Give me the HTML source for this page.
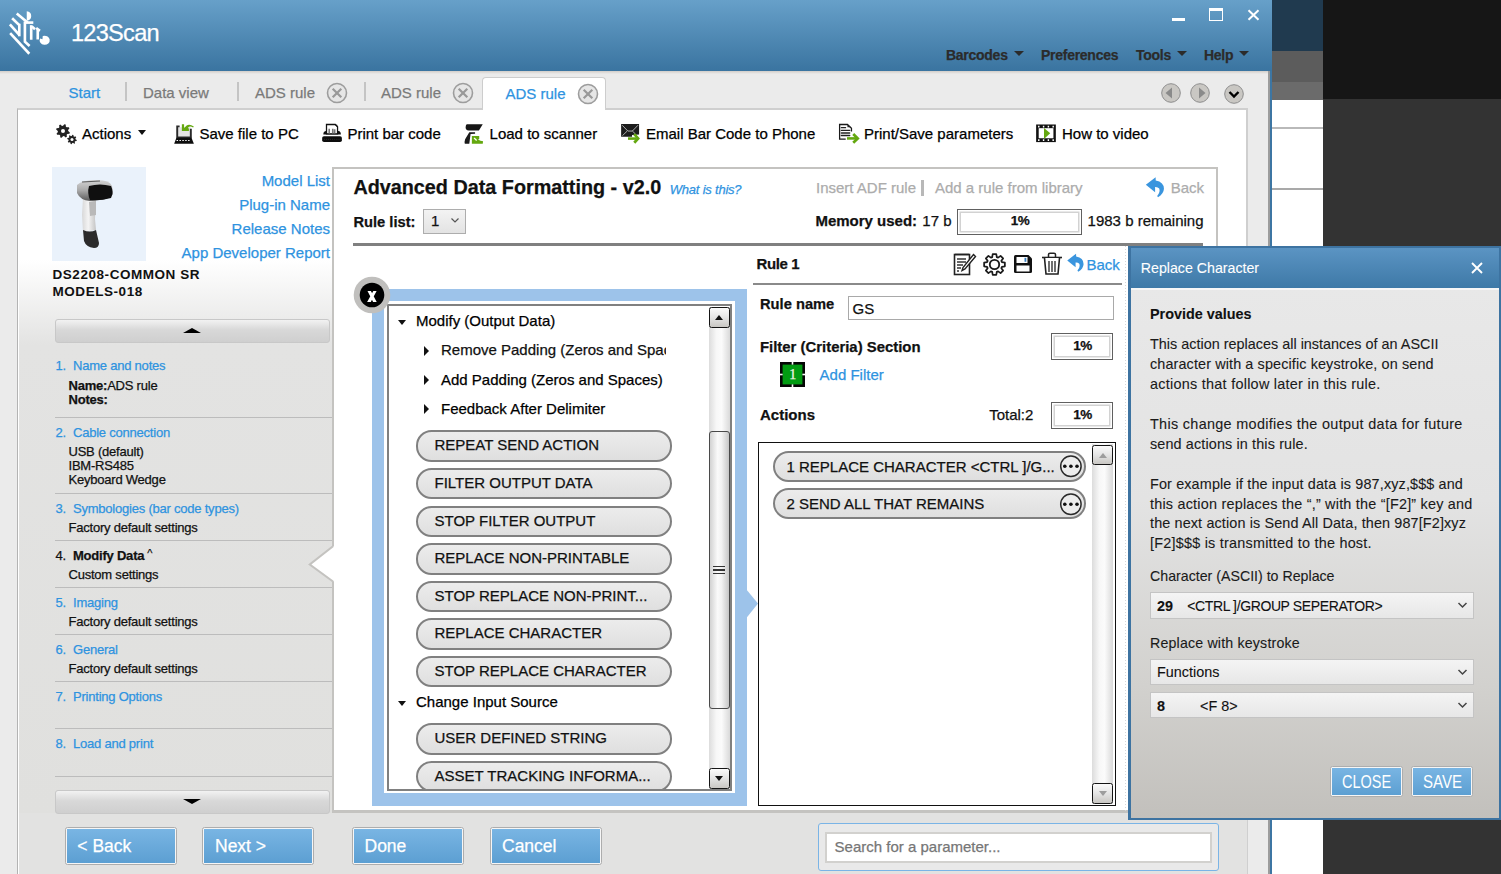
<!DOCTYPE html><html><head><meta charset="utf-8"><style>
html,body{margin:0;padding:0;width:1501px;height:874px;overflow:hidden;background:#ebebeb;font-family:"Liberation Sans",sans-serif}
div{-webkit-text-stroke:0.25px currentColor}
</style></head><body>
<div style="position:absolute;left:1272.00px;top:0.00px;width:51px;height:874px;background:#fff"></div>
<div style="position:absolute;left:1272.00px;top:0.00px;width:51px;height:51px;background:#203a4f"></div>
<div style="position:absolute;left:1272.00px;top:51.00px;width:51px;height:31px;background:#5c5c5c"></div>
<div style="position:absolute;left:1272.00px;top:82.00px;width:51px;height:17.5px;background:#6b6b6b"></div>
<div style="position:absolute;left:1272.00px;top:127.00px;width:51px;height:2px;background:#b9b9b9"></div>
<div style="position:absolute;left:1272.00px;top:188.00px;width:51px;height:2px;background:#a9a9a9"></div>
<div style="position:absolute;left:1323.00px;top:0.00px;width:178px;height:99px;background:#161616"></div>
<div style="position:absolute;left:1323.00px;top:99.00px;width:178px;height:775px;background:#333333"></div>
<div style="position:absolute;left:1269.50px;top:71.00px;width:2.5px;height:803px;background:#3d76a3"></div>
<div style="position:absolute;left:0.00px;top:71.00px;width:1270px;height:803px;background:#ebebeb"></div>
<div style="position:absolute;left:1268.00px;top:71.00px;width:1.8px;height:803px;background:#9c9c9c"></div>
<div style="position:absolute;left:0.00px;top:0.00px;width:1272px;height:71px;background:linear-gradient(#67a0c9,#3a74a0)"></div>
<div style="position:absolute;left:0.00px;top:71.00px;width:1268px;height:3px;background:linear-gradient(#d2cdc8,#ebebeb)"></div>
<svg style="position:absolute;left:5px;top:8px" width="50" height="50" viewBox="0 0 874 874">
<g stroke="#fff" stroke-width="46" fill="none" stroke-linecap="butt">
<path d="M90 440L425 800"/>
<path d="M85 285L250 470"/>
<path d="M125 180L250 300"/>
<path d="M250 275V495"/>
<path d="M205 95L395 255"/>
<path d="M348 235V590L430 665"/>
<path d="M355 255H495"/>
<path d="M458 300V555"/>
<path d="M470 325L525 370"/>
<path d="M572 375V550"/>
<path d="M545 350L610 400"/>
</g>
<path d="M380 55A88 84 0 0 1 380 222Z" fill="#fff"/>
<path d="M612 535A88 80 0 1 0 660 490L655 545Z" fill="#fff"/>
</svg>
<div style="position:absolute;left:71px;top:21.82px;font-family:'Liberation Sans',sans-serif;font-size:23.6px;line-height:23.6px;font-weight:400;color:#fff;white-space:nowrap;letter-spacing:-0.75px;">123Scan</div>
<div style="position:absolute;left:1171.60px;top:17.70px;width:13.6px;height:3.5px;background:#fff"></div>
<div style="position:absolute;left:1209.00px;top:8.00px;width:13.7px;height:13px;border:1.6px solid #fff;border-top-width:3.2px;box-sizing:border-box"></div>
<svg style="position:absolute;left:1247px;top:9px" width="13" height="12" viewBox="0 0 13 12"><path d="M1.5 1.2L11.5 10.8M11.5 1.2L1.5 10.8" stroke="#fff" stroke-width="2"/></svg>
<div style="position:absolute;left:946px;top:48.35px;font-family:'Liberation Sans',sans-serif;font-size:14px;line-height:14px;font-weight:700;color:#2b2b2b;white-space:nowrap;letter-spacing:-0.27px;">Barcodes</div>
<div style="position:absolute;left:1014px;top:51px;width:0;height:0;border-left:5px solid transparent;border-right:5px solid transparent;border-top:5px solid #2b2b2b"></div>
<div style="position:absolute;left:1041px;top:48.35px;font-family:'Liberation Sans',sans-serif;font-size:14px;line-height:14px;font-weight:700;color:#2b2b2b;white-space:nowrap;letter-spacing:-0.27px;">Preferences</div>
<div style="position:absolute;left:1136px;top:48.35px;font-family:'Liberation Sans',sans-serif;font-size:14px;line-height:14px;font-weight:700;color:#2b2b2b;white-space:nowrap;letter-spacing:-0.27px;">Tools</div>
<div style="position:absolute;left:1177px;top:51px;width:0;height:0;border-left:5px solid transparent;border-right:5px solid transparent;border-top:5px solid #2b2b2b"></div>
<div style="position:absolute;left:1204px;top:48.35px;font-family:'Liberation Sans',sans-serif;font-size:14px;line-height:14px;font-weight:700;color:#2b2b2b;white-space:nowrap;letter-spacing:-0.27px;">Help</div>
<div style="position:absolute;left:1239px;top:51px;width:0;height:0;border-left:5px solid transparent;border-right:5px solid transparent;border-top:5px solid #2b2b2b"></div>
<div style="position:absolute;left:68.6px;top:85.10px;font-family:'Liberation Sans',sans-serif;font-size:15px;line-height:15px;font-weight:400;color:#2e93df;white-space:nowrap;">Start</div>
<div style="position:absolute;left:125.00px;top:82.00px;width:2px;height:19px;background:#c4c4c4"></div>
<div style="position:absolute;left:143px;top:85.10px;font-family:'Liberation Sans',sans-serif;font-size:15px;line-height:15px;font-weight:400;color:#7a7a7a;white-space:nowrap;">Data view</div>
<div style="position:absolute;left:237.00px;top:82.00px;width:2px;height:19px;background:#c4c4c4"></div>
<div style="position:absolute;left:255px;top:85.10px;font-family:'Liberation Sans',sans-serif;font-size:15px;line-height:15px;font-weight:400;color:#7a7a7a;white-space:nowrap;">ADS rule</div>
<svg style="position:absolute;left:326px;top:82px" width="22" height="22" viewBox="0 0 22 22"><circle cx="11" cy="11" r="9.5" fill="#e6e6e6" stroke="#9d9d9d" stroke-width="1.6"/><path d="M6.7 6.7L15.3 15.3M15.3 6.7L6.7 15.3" stroke="#999" stroke-width="2.2"/></svg>
<div style="position:absolute;left:364.00px;top:82.00px;width:2px;height:19px;background:#c4c4c4"></div>
<div style="position:absolute;left:381px;top:85.10px;font-family:'Liberation Sans',sans-serif;font-size:15px;line-height:15px;font-weight:400;color:#7a7a7a;white-space:nowrap;">ADS rule</div>
<svg style="position:absolute;left:452px;top:82px" width="22" height="22" viewBox="0 0 22 22"><circle cx="11" cy="11" r="9.5" fill="#e6e6e6" stroke="#9d9d9d" stroke-width="1.6"/><path d="M6.7 6.7L15.3 15.3M15.3 6.7L6.7 15.3" stroke="#999" stroke-width="2.2"/></svg>
<div style="position:absolute;left:482.00px;top:77.00px;width:124px;height:33px;background:#fff;border:1px solid #cdcdcd;border-bottom:none;border-radius:4px 4px 0 0;box-sizing:border-box"></div>
<div style="position:absolute;left:505.5px;top:86.10px;font-family:'Liberation Sans',sans-serif;font-size:15px;line-height:15px;font-weight:400;color:#2e93df;white-space:nowrap;">ADS rule</div>
<svg style="position:absolute;left:577px;top:83px" width="22" height="22" viewBox="0 0 22 22"><circle cx="11" cy="11" r="9.5" fill="#e6e6e6" stroke="#9d9d9d" stroke-width="1.6"/><path d="M6.7 6.7L15.3 15.3M15.3 6.7L6.7 15.3" stroke="#999" stroke-width="2.2"/></svg>
<svg style="position:absolute;left:1160px;top:82px" width="22" height="22" viewBox="0 0 22 22"><circle cx="11" cy="11" r="9.3" fill="#c9c7c3" stroke="#8e8e8e" stroke-width="1"/><path d="M5.5 11L12 5.5V16.5Z" fill="#8a8a8a"/></svg>
<svg style="position:absolute;left:1188.5px;top:82px" width="22" height="22" viewBox="0 0 22 22"><circle cx="11" cy="11" r="9.3" fill="#c9c7c3" stroke="#8e8e8e" stroke-width="1"/><path d="M16.5 11L10 5.5V16.5Z" fill="#8a8a8a"/></svg>
<svg style="position:absolute;left:1223px;top:83px" width="22" height="22" viewBox="0 0 22 22"><circle cx="11" cy="11" r="9.3" fill="#c9c7c3" stroke="#8e8e8e" stroke-width="1"/><path d="M6.5 9L11 13.5L15.5 9" stroke="#000" stroke-width="2.4" fill="none"/></svg>
<div style="position:absolute;left:17.00px;top:108.00px;width:1231px;height:780px;background:#fff;border:2px solid #cfcfcf;border-left:1.6px solid #b3b3b3;border-bottom:none;box-sizing:border-box"></div>
<div style="position:absolute;left:483.00px;top:106.00px;width:122px;height:4px;background:#fff"></div>
<svg style="position:absolute;left:56px;top:124px" width="22" height="21" viewBox="0 0 22 21">
<path d="M13.86,8.39L13.46,9.70L11.31,9.90L10.66,10.69L10.87,12.83L9.66,13.48L8.00,12.10L6.98,12.20L5.61,13.86L4.30,13.46L4.10,11.31L3.31,10.66L1.17,10.87L0.52,9.66L1.90,8.00L1.80,6.98L0.14,5.61L0.54,4.30L2.69,4.10L3.34,3.31L3.13,1.17L4.34,0.52L6.00,1.90L7.02,1.80L8.39,0.14L9.70,0.54L9.90,2.69L10.69,3.34L12.83,3.13L13.48,4.34L12.10,6.00L12.20,7.02Z" fill="#222"/><circle cx="7" cy="7" r="2" fill="#fff"/>
<path d="M20.78,15.98L20.59,16.90L19.08,17.16L18.70,17.73L19.04,19.22L18.25,19.74L17.01,18.85L16.34,18.98L15.52,20.28L14.60,20.09L14.34,18.58L13.77,18.20L12.28,18.54L11.76,17.75L12.65,16.51L12.52,15.84L11.22,15.02L11.41,14.10L12.92,13.84L13.30,13.27L12.96,11.78L13.75,11.26L14.99,12.15L15.66,12.02L16.48,10.72L17.40,10.91L17.66,12.42L18.23,12.80L19.72,12.46L20.24,13.25L19.35,14.49L19.48,15.16Z" fill="#222"/><circle cx="16" cy="15.5" r="1.5" fill="#fff"/></svg>
<div style="position:absolute;left:82px;top:126.10px;font-family:'Liberation Sans',sans-serif;font-size:15px;line-height:15px;font-weight:400;color:#000;white-space:nowrap;">Actions</div>
<div style="position:absolute;left:138px;top:130px;width:0;height:0;border-left:4.5px solid transparent;border-right:4.5px solid transparent;border-top:5px solid #111"></div>
<svg style="position:absolute;left:170px;top:120px" width="30" height="28" viewBox="0 0 936 874">
<rect x="240" y="225" width="400" height="320" fill="#e4e4e4"/>
<path d="M300 200H225V545H650V270" fill="none" stroke="#2a2a2a" stroke-width="60"/>
<path d="M200 555H670L745 745H130Z" fill="#0d0d0d"/>
<path d="M205 640H650" stroke="#fff" stroke-width="32" stroke-dasharray="45 45"/>
<path d="M370 130H440V250L520 175Q600 110 745 200L720 235Q620 175 560 240L590 270V340H370Z" fill="#64a80f"/>
</svg>
<div style="position:absolute;left:199.5px;top:126.10px;font-family:'Liberation Sans',sans-serif;font-size:15px;line-height:15px;font-weight:400;color:#000;white-space:nowrap;">Save file to PC</div>
<svg style="position:absolute;left:318px;top:120px" width="30" height="28" viewBox="0 0 936 874">
<path d="M165 450Q165 350 255 340H640Q710 350 715 450Z" fill="#111"/>
<path d="M265 140H540L610 210V430H265Z" fill="#fff" stroke="#111" stroke-width="40"/>
<path d="M520 150L600 150L600 220Z" fill="#111"/>
<path d="M350 270V420M460 270V420M520 290V420" stroke="#777" stroke-width="50"/>
<rect x="130" y="505" width="615" height="180" rx="55" fill="#0d0d0d"/>
<path d="M190 605H690" stroke="#555" stroke-width="20" stroke-dasharray="20 45"/>
</svg>
<div style="position:absolute;left:347.4px;top:126.10px;font-family:'Liberation Sans',sans-serif;font-size:15px;line-height:15px;font-weight:400;color:#000;white-space:nowrap;">Print bar code</div>
<svg style="position:absolute;left:460px;top:120px" width="30" height="28" viewBox="0 0 936 874">
<path d="M210 130H710L590 330H270Q170 320 175 230Q180 140 210 130Z" fill="#161616"/>
<path d="M290 380H470V430L330 440L290 740H150Q130 690 160 600Z" fill="#1a1a1a"/>
<path d="M370 500H600V590L560 610L640 650L720 660L710 740H370Z" fill="#64a80f"/>
<path d="M440 560L520 640" stroke="#fff" stroke-width="40"/>
</svg>
<div style="position:absolute;left:489.6px;top:126.10px;font-family:'Liberation Sans',sans-serif;font-size:15px;line-height:15px;font-weight:400;color:#000;white-space:nowrap;">Load to scanner</div>
<svg style="position:absolute;left:616px;top:120px" width="30" height="28" viewBox="0 0 936 874">
<path d="M160 125H720V450L500 470V520H160Z" fill="#1c1c1c"/>
<path d="M195 165L370 345H510L690 160M200 490L350 345M510 345L600 430" stroke="#e8e8e8" stroke-width="22" fill="none"/>
<path d="M375 580H640" stroke="#64a80f" stroke-width="80"/>
<path d="M570 440L690 575L570 710" stroke="#64a80f" stroke-width="85" fill="none"/>
</svg>
<div style="position:absolute;left:646px;top:126.10px;font-family:'Liberation Sans',sans-serif;font-size:15px;line-height:15px;font-weight:400;color:#000;white-space:nowrap;">Email Bar Code to Phone</div>
<svg style="position:absolute;left:834px;top:120px" width="30" height="28" viewBox="0 0 936 874">
<path d="M365 600H175V140H420L545 260V360" fill="none" stroke="#1a1a1a" stroke-width="40"/>
<path d="M420 150V230H530Z" fill="#222"/>
<path d="M230 240H360M230 325H490M230 405H490M230 485H490" stroke="#222" stroke-width="42" stroke-linecap="round"/>
<path d="M405 575H700" stroke="#64a80f" stroke-width="80"/>
<path d="M600 440L740 575L600 710" stroke="#64a80f" stroke-width="85" fill="none"/>
</svg>
<div style="position:absolute;left:864px;top:126.10px;font-family:'Liberation Sans',sans-serif;font-size:15px;line-height:15px;font-weight:400;color:#000;white-space:nowrap;">Print/Save parameters</div>
<svg style="position:absolute;left:1031px;top:120px" width="30" height="28" viewBox="0 0 936 874">
<rect x="160" y="140" width="615" height="550" fill="#111"/>
<rect x="240" y="255" width="460" height="315" fill="#fff"/>
<path d="M215 205H725M215 630H725" stroke="#fff" stroke-width="55" stroke-dasharray="45 105" stroke-dashoffset="-5"/>
<path d="M405 250L600 415L405 590Z" fill="#64a80f"/>
</svg>
<div style="position:absolute;left:1062px;top:126.10px;font-family:'Liberation Sans',sans-serif;font-size:15px;line-height:15px;font-weight:400;color:#000;white-space:nowrap;">How to video</div>
<div style="position:absolute;left:19.00px;top:160.00px;width:314px;height:653px;background:linear-gradient(#fff 0px,#fff 100px,#e3e3e2 185px,#e0e0de 100%)"></div>
<div style="position:absolute;left:19.00px;top:813.00px;width:1228px;height:61px;background:#e2e2e1"></div>
<div style="position:absolute;left:52.00px;top:167.00px;width:94px;height:94px;background:#eaf2fb"></div>
<svg style="position:absolute;left:52px;top:167px" width="94" height="94" viewBox="0 0 94 94">
<defs><linearGradient id="hn" x1="0" x2="1" y1="0" y2="0"><stop offset="0" stop-color="#d8d8d8"/><stop offset="0.45" stop-color="#f4f4f4"/><stop offset="1" stop-color="#c4c4c4"/></linearGradient>
<linearGradient id="hd" x1="0" x2="0" y1="0" y2="1"><stop offset="0" stop-color="#d4d4d4"/><stop offset="0.5" stop-color="#a8a8a8"/><stop offset="1" stop-color="#5a5a5a"/></linearGradient></defs>
<path d="M31 31L44 32L43 52L44 63L31 65L30 48Z" fill="url(#hn)"/>
<path d="M37 35L44 34L44 48L38 49Z" fill="#b9b9b9"/>
<path d="M31 63Q38 66 44 63L47 76Q47 81 42 81Q34 80 32 74Z" fill="#2b2b2b"/>
<path d="M25 18Q30 13 45 13Q58 13 60 19L61 27Q58 32 48 33L38 34Q28 33 25 26Z" fill="url(#hd)"/>
<path d="M37 19Q48 16 59 19Q62 25 59 31Q48 34 38 33Q35 26 37 19Z" fill="#0f0f0f"/>
<path d="M30 15L48 14" stroke="#5a5a5a" stroke-width="1.2"/>
</svg>
<div style="position:absolute;right:1171px;top:173.30px;font-family:'Liberation Sans',sans-serif;font-size:15px;line-height:15px;font-weight:400;color:#2e93df;white-space:nowrap;">Model List</div>
<div style="position:absolute;right:1171px;top:197.30px;font-family:'Liberation Sans',sans-serif;font-size:15px;line-height:15px;font-weight:400;color:#2e93df;white-space:nowrap;">Plug-in Name</div>
<div style="position:absolute;right:1171px;top:221.30px;font-family:'Liberation Sans',sans-serif;font-size:15px;line-height:15px;font-weight:400;color:#2e93df;white-space:nowrap;">Release Notes</div>
<div style="position:absolute;right:1171px;top:245.30px;font-family:'Liberation Sans',sans-serif;font-size:15px;line-height:15px;font-weight:400;color:#2e93df;white-space:nowrap;">App Developer Report</div>
<div style="position:absolute;left:52.5px;top:267.87px;font-family:'Liberation Sans',sans-serif;font-size:13.5px;line-height:13.5px;font-weight:700;color:#111;white-space:nowrap;letter-spacing:0.55px;-webkit-text-stroke:0;">DS2208-COMMON SR</div>
<div style="position:absolute;left:52.5px;top:284.87px;font-family:'Liberation Sans',sans-serif;font-size:13.5px;line-height:13.5px;font-weight:700;color:#111;white-space:nowrap;letter-spacing:0.55px;-webkit-text-stroke:0;">MODELS-018</div>
<div style="position:absolute;left:55.00px;top:318.50px;width:275px;height:24px;background:linear-gradient(#f2f2f2,#d8d8d8 45%,#cfcfcf);border:1px solid #c8c8c8;border-radius:3px;box-sizing:border-box"></div>
<div style="position:absolute;left:183px;top:327.5px;width:0;height:0;border-left:9px solid transparent;border-right:9px solid transparent;border-bottom:5px solid #000"></div>
<div style="position:absolute;left:55.00px;top:789.50px;width:275px;height:24px;background:linear-gradient(#f2f2f2,#d8d8d8 45%,#cfcfcf);border:1px solid #c8c8c8;border-radius:3px;box-sizing:border-box"></div>
<div style="position:absolute;left:183px;top:798.5px;width:0;height:0;border-left:9px solid transparent;border-right:9px solid transparent;border-top:5px solid #000"></div>
<div style="position:absolute;left:55.5px;top:359.00px;font-family:'Liberation Sans',sans-serif;font-size:13px;line-height:13px;font-weight:400;color:#2e93df;white-space:nowrap;letter-spacing:-0.22px;">1.</div>
<div style="position:absolute;left:73px;top:359.00px;font-family:'Liberation Sans',sans-serif;font-size:13px;line-height:13px;font-weight:400;color:#2e93df;white-space:nowrap;letter-spacing:-0.22px;">Name and notes</div>
<div style="position:absolute;left:68.5px;top:378.80px;font-family:'Liberation Sans',sans-serif;font-size:13px;line-height:13px;font-weight:400;color:#111;white-space:nowrap;letter-spacing:-0.22px;"><b>Name:</b>ADS rule</div>
<div style="position:absolute;left:68.5px;top:392.80px;font-family:'Liberation Sans',sans-serif;font-size:13px;line-height:13px;font-weight:400;color:#111;white-space:nowrap;letter-spacing:-0.22px;"><b>Notes:</b></div>
<div style="position:absolute;left:55.00px;top:417.00px;width:278px;height:1px;background:#bcbcbc"></div>
<div style="position:absolute;left:55.5px;top:426.20px;font-family:'Liberation Sans',sans-serif;font-size:13px;line-height:13px;font-weight:400;color:#2e93df;white-space:nowrap;letter-spacing:-0.22px;">2.</div>
<div style="position:absolute;left:73px;top:426.20px;font-family:'Liberation Sans',sans-serif;font-size:13px;line-height:13px;font-weight:400;color:#2e93df;white-space:nowrap;letter-spacing:-0.22px;">Cable connection</div>
<div style="position:absolute;left:68.5px;top:445.40px;font-family:'Liberation Sans',sans-serif;font-size:13px;line-height:13px;font-weight:400;color:#111;white-space:nowrap;letter-spacing:-0.22px;">USB (default)</div>
<div style="position:absolute;left:68.5px;top:459.30px;font-family:'Liberation Sans',sans-serif;font-size:13px;line-height:13px;font-weight:400;color:#111;white-space:nowrap;letter-spacing:-0.22px;">IBM-RS485</div>
<div style="position:absolute;left:68.5px;top:473.40px;font-family:'Liberation Sans',sans-serif;font-size:13px;line-height:13px;font-weight:400;color:#111;white-space:nowrap;letter-spacing:-0.22px;">Keyboard Wedge</div>
<div style="position:absolute;left:55.00px;top:493.00px;width:278px;height:1px;background:#bcbcbc"></div>
<div style="position:absolute;left:55.5px;top:501.50px;font-family:'Liberation Sans',sans-serif;font-size:13px;line-height:13px;font-weight:400;color:#2e93df;white-space:nowrap;letter-spacing:-0.22px;">3.</div>
<div style="position:absolute;left:73px;top:501.50px;font-family:'Liberation Sans',sans-serif;font-size:13px;line-height:13px;font-weight:400;color:#2e93df;white-space:nowrap;letter-spacing:-0.22px;">Symbologies (bar code types)</div>
<div style="position:absolute;left:68.5px;top:520.50px;font-family:'Liberation Sans',sans-serif;font-size:13px;line-height:13px;font-weight:400;color:#111;white-space:nowrap;letter-spacing:-0.22px;">Factory default settings</div>
<div style="position:absolute;left:55.00px;top:540.00px;width:278px;height:1px;background:#bcbcbc"></div>
<div style="position:absolute;left:55.5px;top:548.50px;font-family:'Liberation Sans',sans-serif;font-size:13px;line-height:13px;font-weight:400;color:#111;white-space:nowrap;letter-spacing:-0.22px;">4.</div>
<div style="position:absolute;left:73px;top:548.50px;font-family:'Liberation Sans',sans-serif;font-size:13px;line-height:13px;font-weight:700;color:#111;white-space:nowrap;letter-spacing:-0.22px;">Modify Data<span style="font-weight:400;font-size:11px;position:relative;top:-3px;margin-left:3px">^</span></div>
<div style="position:absolute;left:68.5px;top:567.50px;font-family:'Liberation Sans',sans-serif;font-size:13px;line-height:13px;font-weight:400;color:#111;white-space:nowrap;letter-spacing:-0.22px;">Custom settings</div>
<div style="position:absolute;left:55.00px;top:587.00px;width:278px;height:1px;background:#bcbcbc"></div>
<div style="position:absolute;left:55.5px;top:595.50px;font-family:'Liberation Sans',sans-serif;font-size:13px;line-height:13px;font-weight:400;color:#2e93df;white-space:nowrap;letter-spacing:-0.22px;">5.</div>
<div style="position:absolute;left:73px;top:595.50px;font-family:'Liberation Sans',sans-serif;font-size:13px;line-height:13px;font-weight:400;color:#2e93df;white-space:nowrap;letter-spacing:-0.22px;">Imaging</div>
<div style="position:absolute;left:68.5px;top:614.50px;font-family:'Liberation Sans',sans-serif;font-size:13px;line-height:13px;font-weight:400;color:#111;white-space:nowrap;letter-spacing:-0.22px;">Factory default settings</div>
<div style="position:absolute;left:55.00px;top:634.00px;width:278px;height:1px;background:#bcbcbc"></div>
<div style="position:absolute;left:55.5px;top:642.50px;font-family:'Liberation Sans',sans-serif;font-size:13px;line-height:13px;font-weight:400;color:#2e93df;white-space:nowrap;letter-spacing:-0.22px;">6.</div>
<div style="position:absolute;left:73px;top:642.50px;font-family:'Liberation Sans',sans-serif;font-size:13px;line-height:13px;font-weight:400;color:#2e93df;white-space:nowrap;letter-spacing:-0.22px;">General</div>
<div style="position:absolute;left:68.5px;top:661.50px;font-family:'Liberation Sans',sans-serif;font-size:13px;line-height:13px;font-weight:400;color:#111;white-space:nowrap;letter-spacing:-0.22px;">Factory default settings</div>
<div style="position:absolute;left:55.00px;top:681.00px;width:278px;height:1px;background:#bcbcbc"></div>
<div style="position:absolute;left:55.5px;top:689.50px;font-family:'Liberation Sans',sans-serif;font-size:13px;line-height:13px;font-weight:400;color:#2e93df;white-space:nowrap;letter-spacing:-0.22px;">7.</div>
<div style="position:absolute;left:73px;top:689.50px;font-family:'Liberation Sans',sans-serif;font-size:13px;line-height:13px;font-weight:400;color:#2e93df;white-space:nowrap;letter-spacing:-0.22px;">Printing Options</div>
<div style="position:absolute;left:55.00px;top:728.00px;width:278px;height:1px;background:#bcbcbc"></div>
<div style="position:absolute;left:55.5px;top:736.50px;font-family:'Liberation Sans',sans-serif;font-size:13px;line-height:13px;font-weight:400;color:#2e93df;white-space:nowrap;letter-spacing:-0.22px;">8.</div>
<div style="position:absolute;left:73px;top:736.50px;font-family:'Liberation Sans',sans-serif;font-size:13px;line-height:13px;font-weight:400;color:#2e93df;white-space:nowrap;letter-spacing:-0.22px;">Load and print</div>
<div style="position:absolute;left:55.00px;top:776.00px;width:278px;height:1px;background:#bcbcbc"></div>
<div style="position:absolute;left:332.00px;top:167.00px;width:886px;height:646px;background:#fff;border:2px solid #c4c3c0;border-bottom-width:3px;box-sizing:border-box"></div>
<svg style="position:absolute;left:300px;top:540px" width="40" height="50" viewBox="0 0 40 50"><path d="M33 6.5L9.8 24.5L33 41.2Z" fill="#fff"/><rect x="32" y="6.5" width="4" height="34.7" fill="#fff"/><path d="M33 6.2L9.8 24.5L33 41.5" fill="none" stroke="#c4c3c0" stroke-width="2.1" stroke-linejoin="miter"/></svg>
<div style="position:absolute;left:353.4px;top:177.84px;font-family:'Liberation Sans',sans-serif;font-size:19.8px;line-height:19.8px;font-weight:700;color:#111;white-space:nowrap;">Advanced Data Formatting - v2.0</div>
<div style="position:absolute;left:669.8px;top:183.30px;font-family:'Liberation Sans',sans-serif;font-size:13px;line-height:13px;font-weight:400;color:#2e93df;white-space:nowrap;letter-spacing:-0.22px;font-style:italic;">What is this?</div>
<div style="position:absolute;left:816px;top:179.70px;font-family:'Liberation Sans',sans-serif;font-size:15px;line-height:15px;font-weight:400;color:#acacac;white-space:nowrap;">Insert ADF rule</div>
<div style="position:absolute;left:921.00px;top:180.00px;width:3px;height:16px;background:#b8b8b8"></div>
<div style="position:absolute;left:935px;top:179.70px;font-family:'Liberation Sans',sans-serif;font-size:15px;line-height:15px;font-weight:400;color:#acacac;white-space:nowrap;">Add a rule from library</div>
<svg style="position:absolute;left:1140px;top:172px" width="30" height="30" viewBox="0 0 874 874">
<path d="M170 370L455 150L458 245Q700 290 698 490Q690 640 525 735L500 700Q600 580 560 480Q520 430 440 435L440 590Z" fill="#3a95de"/></svg>
<div style="position:absolute;left:1170.7px;top:179.70px;font-family:'Liberation Sans',sans-serif;font-size:15px;line-height:15px;font-weight:400;color:#acacac;white-space:nowrap;">Back</div>
<div style="position:absolute;left:353.4px;top:214.96px;font-family:'Liberation Sans',sans-serif;font-size:14.7px;line-height:14.7px;font-weight:700;color:#111;white-space:nowrap;">Rule list:</div>
<div style="position:absolute;left:423.00px;top:209.00px;width:43px;height:25px;background:linear-gradient(#f3f3f3,#e3e3e3);border:1px solid #adadad;box-sizing:border-box"></div>
<div style="position:absolute;left:431px;top:213.40px;font-family:'Liberation Sans',sans-serif;font-size:15px;line-height:15px;font-weight:400;color:#111;white-space:nowrap;">1</div>
<svg style="position:absolute;left:450px;top:216px" width="10" height="8" viewBox="0 0 10 8"><path d="M1.5 2.5L5 6L8.5 2.5" stroke="#555" stroke-width="1.2" fill="none"/></svg>
<div style="position:absolute;left:815.4px;top:213.30px;font-family:'Liberation Sans',sans-serif;font-size:15px;line-height:15px;font-weight:700;color:#111;white-space:nowrap;">Memory used:</div>
<div style="position:absolute;left:922.3px;top:213.30px;font-family:'Liberation Sans',sans-serif;font-size:15px;line-height:15px;font-weight:400;color:#111;white-space:nowrap;">17 b</div>
<div style="position:absolute;left:957.00px;top:208.50px;width:125px;height:26px;background:#fff;border:1px solid #606060;box-shadow:inset 0 0 0 1.5px #fff,inset 0 0 0 3px #d2d2d2;box-sizing:border-box"></div>
<div style="position:absolute;left:1020.0px;transform:translateX(-50%);top:214.27px;font-family:'Liberation Sans',sans-serif;font-size:13.5px;line-height:13.5px;font-weight:700;color:#111;white-space:nowrap;letter-spacing:-0.6px;">1%</div>
<div style="position:absolute;left:1087.6px;top:213.30px;font-family:'Liberation Sans',sans-serif;font-size:15px;line-height:15px;font-weight:400;color:#111;white-space:nowrap;">1983 b remaining</div>
<div style="position:absolute;left:353.00px;top:243.00px;width:850px;height:3px;background:#808080"></div>
<div style="position:absolute;left:372.00px;top:289.00px;width:375px;height:517px;background:#9dc3ea"></div>
<svg style="position:absolute;left:746px;top:589px" width="13" height="30" viewBox="0 0 13 30"><path d="M0 0L12 14.5L0 29.5Z" fill="#9dc3ea"/></svg>
<div style="position:absolute;left:384.00px;top:301.00px;width:351px;height:492px;background:#fff"></div>
<div style="position:absolute;left:387.00px;top:304.00px;width:345px;height:487px;background:#fff;border:2px solid #808080;box-sizing:border-box;overflow:hidden"></div>
<div style="position:absolute;left:389px;top:306px;width:342px;height:483px;overflow:hidden">
<div style="position:absolute;left:9.00px;top:14.00px;width:0px;height:0px;border-left:4.8px solid transparent;border-right:4.8px solid transparent;border-top:5.3px solid #111"></div>
<div style="position:absolute;left:27px;top:6.70px;font-family:'Liberation Sans',sans-serif;font-size:15px;line-height:15px;font-weight:400;color:#000;white-space:nowrap;">Modify (Output Data)</div>
<div style="position:absolute;left:34.50px;top:39.50px;width:0px;height:0px;border-top:5px solid transparent;border-bottom:5px solid transparent;border-left:5px solid #111"></div>
<div style="position:absolute;left:52px;top:35px;width:225px;height:24px;overflow:hidden">
<div style="position:absolute;left:0;top:0.6px;font-family:'Liberation Sans',sans-serif;font-size:15px;line-height:15px;white-space:nowrap;color:#111">Remove Padding (Zeros and Spaces)</div></div>
<div style="position:absolute;left:34.50px;top:69.00px;width:0px;height:0px;border-top:5px solid transparent;border-bottom:5px solid transparent;border-left:5px solid #111"></div>
<div style="position:absolute;left:52px;top:65.80px;font-family:'Liberation Sans',sans-serif;font-size:15px;line-height:15px;font-weight:400;color:#000;white-space:nowrap;">Add Padding (Zeros and Spaces)</div>
<div style="position:absolute;left:34.50px;top:98.00px;width:0px;height:0px;border-top:5px solid transparent;border-bottom:5px solid transparent;border-left:5px solid #111"></div>
<div style="position:absolute;left:52px;top:94.90px;font-family:'Liberation Sans',sans-serif;font-size:15px;line-height:15px;font-weight:400;color:#000;white-space:nowrap;">Feedback After Delimiter</div>
<div style="position:absolute;left:27.00px;top:124.30px;width:256px;height:31.5px;background:linear-gradient(#ececec,#dfdfdf);border:2px solid #808080;border-radius:15.5px;box-sizing:border-box"></div>
<div style="position:absolute;left:45.5px;top:131.40px;font-family:'Liberation Sans',sans-serif;font-size:15px;line-height:15px;font-weight:400;color:#111;white-space:nowrap;">REPEAT SEND ACTION</div>
<div style="position:absolute;left:27.00px;top:161.90px;width:256px;height:31.5px;background:linear-gradient(#ececec,#dfdfdf);border:2px solid #808080;border-radius:15.5px;box-sizing:border-box"></div>
<div style="position:absolute;left:45.5px;top:169.00px;font-family:'Liberation Sans',sans-serif;font-size:15px;line-height:15px;font-weight:400;color:#111;white-space:nowrap;">FILTER OUTPUT DATA</div>
<div style="position:absolute;left:27.00px;top:199.50px;width:256px;height:31.5px;background:linear-gradient(#ececec,#dfdfdf);border:2px solid #808080;border-radius:15.5px;box-sizing:border-box"></div>
<div style="position:absolute;left:45.5px;top:206.60px;font-family:'Liberation Sans',sans-serif;font-size:15px;line-height:15px;font-weight:400;color:#111;white-space:nowrap;">STOP FILTER OUTPUT</div>
<div style="position:absolute;left:27.00px;top:237.10px;width:256px;height:31.5px;background:linear-gradient(#ececec,#dfdfdf);border:2px solid #808080;border-radius:15.5px;box-sizing:border-box"></div>
<div style="position:absolute;left:45.5px;top:244.20px;font-family:'Liberation Sans',sans-serif;font-size:15px;line-height:15px;font-weight:400;color:#111;white-space:nowrap;">REPLACE NON-PRINTABLE</div>
<div style="position:absolute;left:27.00px;top:274.70px;width:256px;height:31.5px;background:linear-gradient(#ececec,#dfdfdf);border:2px solid #808080;border-radius:15.5px;box-sizing:border-box"></div>
<div style="position:absolute;left:45.5px;top:281.80px;font-family:'Liberation Sans',sans-serif;font-size:15px;line-height:15px;font-weight:400;color:#111;white-space:nowrap;">STOP REPLACE NON-PRINT...</div>
<div style="position:absolute;left:27.00px;top:312.30px;width:256px;height:31.5px;background:linear-gradient(#ececec,#dfdfdf);border:2px solid #808080;border-radius:15.5px;box-sizing:border-box"></div>
<div style="position:absolute;left:45.5px;top:319.40px;font-family:'Liberation Sans',sans-serif;font-size:15px;line-height:15px;font-weight:400;color:#111;white-space:nowrap;">REPLACE CHARACTER</div>
<div style="position:absolute;left:27.00px;top:349.90px;width:256px;height:31.5px;background:linear-gradient(#ececec,#dfdfdf);border:2px solid #808080;border-radius:15.5px;box-sizing:border-box"></div>
<div style="position:absolute;left:45.5px;top:357.00px;font-family:'Liberation Sans',sans-serif;font-size:15px;line-height:15px;font-weight:400;color:#111;white-space:nowrap;">STOP REPLACE CHARACTER</div>
<div style="position:absolute;left:9.00px;top:395.00px;width:0px;height:0px;border-left:4.8px solid transparent;border-right:4.8px solid transparent;border-top:5.3px solid #111"></div>
<div style="position:absolute;left:27px;top:388.30px;font-family:'Liberation Sans',sans-serif;font-size:15px;line-height:15px;font-weight:400;color:#000;white-space:nowrap;">Change Input Source</div>
<div style="position:absolute;left:27.00px;top:417.00px;width:256px;height:31.5px;background:linear-gradient(#ececec,#dfdfdf);border:2px solid #808080;border-radius:15.5px;box-sizing:border-box"></div>
<div style="position:absolute;left:45.5px;top:424.10px;font-family:'Liberation Sans',sans-serif;font-size:15px;line-height:15px;font-weight:400;color:#111;white-space:nowrap;">USER DEFINED STRING</div>
<div style="position:absolute;left:27.00px;top:454.60px;width:256px;height:31.5px;background:linear-gradient(#ececec,#dfdfdf);border:2px solid #808080;border-radius:15.5px;box-sizing:border-box"></div>
<div style="position:absolute;left:45.5px;top:461.70px;font-family:'Liberation Sans',sans-serif;font-size:15px;line-height:15px;font-weight:400;color:#111;white-space:nowrap;">ASSET TRACKING INFORMA...</div>
<div style="position:absolute;left:319.80px;top:0.50px;width:21px;height:482.5px;background:linear-gradient(90deg,#dcdcdc,#f7f7f7 35%,#fbfbfb 60%,#d9d9d9)"></div>
<div style="position:absolute;left:319.80px;top:1.00px;width:21px;height:20.5px;background:linear-gradient(#fbfbfb,#e4e4e4 50%,#c9c7c3);border:1.5px solid #151515;border-radius:2.5px;box-sizing:border-box"></div>
<div style="position:absolute;left:326.30px;top:9.00px;width:0px;height:0px;border-left:4px solid transparent;border-right:4px solid transparent;border-bottom:5px solid #111"></div>
<div style="position:absolute;left:319.80px;top:462.00px;width:21px;height:20.5px;background:linear-gradient(#fbfbfb,#e4e4e4 50%,#c9c7c3);border:1.5px solid #151515;border-radius:2.5px;box-sizing:border-box"></div>
<div style="position:absolute;left:326.30px;top:469.50px;width:0px;height:0px;border-left:4px solid transparent;border-right:4px solid transparent;border-top:5px solid #111"></div>
<div style="position:absolute;left:319.80px;top:125.30px;width:21px;height:277.5px;background:linear-gradient(90deg,#d2d2d2,#fafafa 40%,#f3f3f3 60%,#c6c6c6);border:1.3px solid #4a4a4a;border-radius:3px;box-sizing:border-box"></div>
<div style="position:absolute;left:323.80px;top:260.00px;width:12.7px;height:1.1px;background:#333"></div>
<div style="position:absolute;left:323.80px;top:263.25px;width:12.7px;height:1.6px;background:#333"></div>
<div style="position:absolute;left:323.80px;top:267.00px;width:12.7px;height:1.1px;background:#333"></div>
</div>
<svg style="position:absolute;left:353px;top:276px" width="38" height="38" viewBox="0 0 38 38">
<circle cx="19" cy="19" r="18.3" fill="#c0bfbd"/><circle cx="19" cy="19" r="12.3" fill="#000"/>
</svg>
<svg style="position:absolute;left:360px;top:285px" width="24" height="24" viewBox="360 285 24 24"><path d="M367.5 291H370.9L376.7 301.9H373.1Z M373.3 291H376.6L370.8 301.9H367.1Z" fill="#fff"/></svg>
<div style="position:absolute;left:756.6px;top:256.30px;font-family:'Liberation Sans',sans-serif;font-size:15px;line-height:15px;font-weight:700;color:#111;white-space:nowrap;letter-spacing:-0.4px;">Rule 1</div>
<svg style="position:absolute;left:953px;top:252px" width="24" height="24" viewBox="0 0 24 24">
<rect x="1.5" y="2.5" width="15" height="20" fill="#fff" stroke="#222" stroke-width="1.6"/>
<path d="M3 1.5V3.5M5 1.5V3.5M7 1.5V3.5M9 1.5V3.5M11 1.5V3.5M13 1.5V3.5M15 1.5V3.5" stroke="#222" stroke-width="1"/>
<path d="M4 7H13M4 10H13M4 13H10M4 16H8M4 19H6" stroke="#333" stroke-width="1.3"/>
<path d="M20.5 2.5L22.5 4.5L12 17L9 18.5L10 15.5Z" fill="#fff" stroke="#222" stroke-width="1.4"/>
</svg>
<svg style="position:absolute;left:983px;top:253px" width="23" height="23" viewBox="0 0 22.5 22.5">
<path d="M18.51,9.00L21.40,9.51L21.40,12.99L18.51,13.50L17.97,14.80L19.66,17.20L17.20,19.66L14.80,17.97L13.50,18.51L12.99,21.40L9.51,21.40L9.00,18.51L7.70,17.97L5.30,19.66L2.84,17.20L4.53,14.80L3.99,13.50L1.10,12.99L1.10,9.51L3.99,9.00L4.53,7.70L2.84,5.30L5.30,2.84L7.70,4.53L9.00,3.99L9.51,1.10L12.99,1.10L13.50,3.99L14.80,4.53L17.20,2.84L19.66,5.30L17.97,7.70Z" fill="#fff" stroke="#1a1a1a" stroke-width="1.7" stroke-linejoin="round"/><circle cx="11.25" cy="11.25" r="4.6" fill="#fff" stroke="#1a1a1a" stroke-width="1.8"/></svg>
<svg style="position:absolute;left:1013px;top:254px" width="20" height="20" viewBox="0 0 20 20">
<path d="M1 2.5Q1 1 2.5 1H15.5L19 4.5V17.5Q19 19 17.5 19H2.5Q1 19 1 17.5Z" fill="#111"/>
<rect x="3.5" y="3" width="11" height="6" fill="#fff"/><rect x="11.5" y="3.8" width="1.8" height="4" fill="#3a80c0"/>
<rect x="3.5" y="11.5" width="13" height="6" fill="#fff"/>
</svg>
<svg style="position:absolute;left:1041px;top:252px" width="22" height="24" viewBox="0 0 22 24">
<path d="M1 5.5H21" stroke="#222" stroke-width="1.6"/>
<path d="M7.5 5V2.5Q7.5 1.2 9 1.2H13Q14.5 1.2 14.5 2.5V5" fill="none" stroke="#222" stroke-width="1.5"/>
<path d="M3.5 6L5 22H17L18.5 6" fill="#fff" stroke="#222" stroke-width="1.6"/>
<path d="M8 9V20M11 9V20M14 9V20" stroke="#222" stroke-width="1.3"/>
</svg>
<svg style="position:absolute;left:1062px;top:249px" width="27" height="27" viewBox="0 0 874 874">
<path d="M170 370L455 150L458 245Q700 290 698 490Q690 640 525 735L500 700Q600 580 560 480Q520 430 440 435L440 590Z" fill="#3a95de"/></svg>
<div style="position:absolute;left:1086.5px;top:256.70px;font-family:'Liberation Sans',sans-serif;font-size:15px;line-height:15px;font-weight:400;color:#2e93df;white-space:nowrap;">Back</div>
<div style="position:absolute;left:753.00px;top:282.50px;width:369px;height:2px;background:#8a8a8a"></div>
<div style="position:absolute;left:760px;top:296.96px;font-family:'Liberation Sans',sans-serif;font-size:14.7px;line-height:14.7px;font-weight:700;color:#111;white-space:nowrap;">Rule name</div>
<div style="position:absolute;left:848.00px;top:295.50px;width:266px;height:24.5px;background:#fff;border:1px solid #a9a9a9;box-sizing:border-box"></div>
<div style="position:absolute;left:852.5px;top:300.60px;font-family:'Liberation Sans',sans-serif;font-size:15px;line-height:15px;font-weight:400;color:#111;white-space:nowrap;">GS</div>
<div style="position:absolute;left:760px;top:339.69px;font-family:'Liberation Sans',sans-serif;font-size:14.9px;line-height:14.9px;font-weight:700;color:#111;white-space:nowrap;">Filter (Criteria) Section</div>
<div style="position:absolute;left:1051.00px;top:333.00px;width:62px;height:26.5px;background:#fff;border:1px solid #606060;box-shadow:inset 0 0 0 1.5px #fff,inset 0 0 0 3px #d2d2d2;box-sizing:border-box"></div>
<div style="position:absolute;left:1082.5px;transform:translateX(-50%);top:339.02px;font-family:'Liberation Sans',sans-serif;font-size:13.5px;line-height:13.5px;font-weight:700;color:#111;white-space:nowrap;letter-spacing:-0.6px;">1%</div>
<svg style="position:absolute;left:780px;top:362px" width="25" height="25" viewBox="0 0 25 25">
<rect x="0" y="0" width="25" height="25" fill="#050505"/><rect x="2.6" y="2.6" width="19.8" height="19.8" fill="#029c12"/>
<rect x="11.7" y="0" width="1.6" height="2.6" fill="#fff"/><rect x="11.7" y="22.4" width="1.6" height="2.6" fill="#fff"/>
<rect x="0" y="11.7" width="2.6" height="1.6" fill="#fff"/><rect x="22.4" y="11.7" width="2.6" height="1.6" fill="#fff"/>
</svg>
<div style="position:absolute;left:792.7px;transform:translateX(-50%);top:368.45px;font-family:'Liberation Serif',serif;font-size:14px;line-height:14px;font-weight:400;color:#f4f4e8;white-space:nowrap;">1</div>
<div style="position:absolute;left:819.6px;top:367.10px;font-family:'Liberation Sans',sans-serif;font-size:15px;line-height:15px;font-weight:400;color:#2e93df;white-space:nowrap;">Add Filter</div>
<div style="position:absolute;left:760px;top:406.70px;font-family:'Liberation Sans',sans-serif;font-size:15px;line-height:15px;font-weight:700;color:#111;white-space:nowrap;">Actions</div>
<div style="position:absolute;left:989.2px;top:406.70px;font-family:'Liberation Sans',sans-serif;font-size:15px;line-height:15px;font-weight:400;color:#111;white-space:nowrap;">Total:2</div>
<div style="position:absolute;left:1051.00px;top:402.00px;width:62px;height:26.5px;background:#fff;border:1px solid #606060;box-shadow:inset 0 0 0 1.5px #fff,inset 0 0 0 3px #d2d2d2;box-sizing:border-box"></div>
<div style="position:absolute;left:1082.5px;transform:translateX(-50%);top:408.02px;font-family:'Liberation Sans',sans-serif;font-size:13.5px;line-height:13.5px;font-weight:700;color:#111;white-space:nowrap;letter-spacing:-0.6px;">1%</div>
<div style="position:absolute;left:758.00px;top:442.00px;width:358px;height:364px;background:#fff;border:1.5px solid #111;box-sizing:border-box"></div>
<div style="position:absolute;left:773.00px;top:450.50px;width:313px;height:31px;background:linear-gradient(#ececec,#dfdfdf);border:2px solid #808080;border-radius:15.5px;box-sizing:border-box"></div>
<div style="position:absolute;left:786.5px;top:458.60px;font-family:'Liberation Sans',sans-serif;font-size:15px;line-height:15px;font-weight:400;color:#111;white-space:nowrap;">1 REPLACE CHARACTER &lt;CTRL ]/G...</div>
<svg style="position:absolute;left:1059px;top:455.0px" width="23" height="23" viewBox="0 0 23 23">
<circle cx="11.9" cy="11.2" r="10.2" fill="#ececec" stroke="#2a2a2a" stroke-width="1.5"/>
<circle cx="5.8" cy="11.2" r="1.8" fill="#111"/><circle cx="11.9" cy="11.2" r="1.8" fill="#111"/><circle cx="18" cy="11.2" r="1.8" fill="#111"/></svg>
<div style="position:absolute;left:773.00px;top:488.00px;width:313px;height:31px;background:linear-gradient(#ececec,#dfdfdf);border:2px solid #808080;border-radius:15.5px;box-sizing:border-box"></div>
<div style="position:absolute;left:786.5px;top:496.10px;font-family:'Liberation Sans',sans-serif;font-size:15px;line-height:15px;font-weight:400;color:#111;white-space:nowrap;">2 SEND ALL THAT REMAINS</div>
<svg style="position:absolute;left:1059px;top:492.5px" width="23" height="23" viewBox="0 0 23 23">
<circle cx="11.9" cy="11.2" r="10.2" fill="#ececec" stroke="#2a2a2a" stroke-width="1.5"/>
<circle cx="5.8" cy="11.2" r="1.8" fill="#111"/><circle cx="11.9" cy="11.2" r="1.8" fill="#111"/><circle cx="18" cy="11.2" r="1.8" fill="#111"/></svg>
<div style="position:absolute;left:1092.00px;top:444.00px;width:21px;height:360px;background:linear-gradient(90deg,#dcdcdc,#f7f7f7 35%,#fbfbfb 60%,#d9d9d9)"></div>
<div style="position:absolute;left:1092.00px;top:444.50px;width:21px;height:20.5px;background:linear-gradient(#fbfbfb,#e4e4e4 50%,#c9c7c3);border:1.5px solid #151515;border-radius:2.5px;box-sizing:border-box"></div>
<div style="position:absolute;left:1098.50px;top:452.50px;width:0px;height:0px;border-left:4px solid transparent;border-right:4px solid transparent;border-bottom:5px solid #9d9d9d"></div>
<div style="position:absolute;left:1092.00px;top:783.00px;width:21px;height:20.5px;background:linear-gradient(#fbfbfb,#e4e4e4 50%,#c9c7c3);border:1.5px solid #151515;border-radius:2.5px;box-sizing:border-box"></div>
<div style="position:absolute;left:1098.50px;top:790.50px;width:0px;height:0px;border-left:4px solid transparent;border-right:4px solid transparent;border-top:5px solid #9d9d9d"></div>
<div style="position:absolute;left:1124.50px;top:246.00px;width:1px;height:567px;background-image:linear-gradient(#d6d6d6 50%,transparent 50%);background-size:1px 3px"></div>
<div style="position:absolute;left:64.50px;top:827.00px;width:112px;height:38px;background:#f6f6f6;border:1px solid #adadad;border-radius:2.5px;box-sizing:border-box"></div>
<div style="position:absolute;left:66.50px;top:829.00px;width:108px;height:34px;background:linear-gradient(#79b5e3,#5c9fd2)"></div>
<div style="position:absolute;left:77.3px;top:837.99px;font-family:'Liberation Sans',sans-serif;font-size:17.5px;line-height:17.5px;font-weight:400;color:#fff;white-space:nowrap;">&lt; Back</div>
<div style="position:absolute;left:202.00px;top:827.00px;width:112px;height:38px;background:#f6f6f6;border:1px solid #adadad;border-radius:2.5px;box-sizing:border-box"></div>
<div style="position:absolute;left:204.00px;top:829.00px;width:108px;height:34px;background:linear-gradient(#79b5e3,#5c9fd2)"></div>
<div style="position:absolute;left:215px;top:837.99px;font-family:'Liberation Sans',sans-serif;font-size:17.5px;line-height:17.5px;font-weight:400;color:#fff;white-space:nowrap;">Next &gt;</div>
<div style="position:absolute;left:352.00px;top:827.00px;width:112px;height:38px;background:#f6f6f6;border:1px solid #adadad;border-radius:2.5px;box-sizing:border-box"></div>
<div style="position:absolute;left:354.00px;top:829.00px;width:108px;height:34px;background:linear-gradient(#79b5e3,#5c9fd2)"></div>
<div style="position:absolute;left:364.5px;top:837.99px;font-family:'Liberation Sans',sans-serif;font-size:17.5px;line-height:17.5px;font-weight:400;color:#fff;white-space:nowrap;">Done</div>
<div style="position:absolute;left:490.00px;top:827.00px;width:112px;height:38px;background:#f6f6f6;border:1px solid #adadad;border-radius:2.5px;box-sizing:border-box"></div>
<div style="position:absolute;left:492.00px;top:829.00px;width:108px;height:34px;background:linear-gradient(#79b5e3,#5c9fd2)"></div>
<div style="position:absolute;left:502px;top:837.99px;font-family:'Liberation Sans',sans-serif;font-size:17.5px;line-height:17.5px;font-weight:400;color:#fff;white-space:nowrap;">Cancel</div>
<div style="position:absolute;left:818.00px;top:823.00px;width:400.5px;height:48px;background:#e9e9e9;border:1.5px solid #7ab4e6;border-radius:3px;box-sizing:border-box"></div>
<div style="position:absolute;left:824.70px;top:832.00px;width:387.5px;height:30.6px;background:#fff;border:2.4px solid #d2d1ce;box-sizing:border-box"></div>
<div style="position:absolute;left:834.6px;top:838.70px;font-family:'Liberation Sans',sans-serif;font-size:15px;line-height:15px;font-weight:400;color:#767676;white-space:nowrap;">Search for a parameter...</div>
<div style="position:absolute;left:1128.00px;top:245.80px;width:373px;height:574.5px;background:#3d73a1"></div>
<div style="position:absolute;left:1130.50px;top:247.50px;width:368.5px;height:40px;background:linear-gradient(#5b94c3,#3e79a7)"></div>
<div style="position:absolute;left:1140.8px;top:261.28px;font-family:'Liberation Sans',sans-serif;font-size:14.2px;line-height:14.2px;font-weight:400;color:#fff;white-space:nowrap;-webkit-text-stroke:0.1px currentColor;">Replace Character</div>
<svg style="position:absolute;left:1471px;top:261.5px" width="12" height="12" viewBox="0 0 12 12"><path d="M1 1L11 11M11 1L1 11" stroke="#fff" stroke-width="1.9"/></svg>
<div style="position:absolute;left:1130.50px;top:287.50px;width:368.5px;height:530.5px;background:linear-gradient(#e8e8e8,#e3e3e3 40%,#d2d1ce 75%,#c2c0bc)"></div>
<div style="position:absolute;left:1131.00px;top:288.00px;width:367.5px;height:1.5px;background:rgba(255,255,255,0.6)"></div>
<div style="position:absolute;left:1150px;top:306.81px;font-family:'Liberation Sans',sans-serif;font-size:14.4px;line-height:14.4px;font-weight:700;color:#111;white-space:nowrap;-webkit-text-stroke:0.1px currentColor;">Provide values</div>
<div style="position:absolute;left:1150px;top:337.21px;font-family:'Liberation Sans',sans-serif;font-size:14.4px;line-height:14.4px;font-weight:400;color:#1a1a1a;white-space:nowrap;letter-spacing:0.011px;-webkit-text-stroke:0.1px currentColor;">This action replaces all instances of an ASCII</div>
<div style="position:absolute;left:1150px;top:356.81px;font-family:'Liberation Sans',sans-serif;font-size:14.4px;line-height:14.4px;font-weight:400;color:#1a1a1a;white-space:nowrap;letter-spacing:0.12px;-webkit-text-stroke:0.1px currentColor;">character with a specific keystroke, on send</div>
<div style="position:absolute;left:1150px;top:376.61px;font-family:'Liberation Sans',sans-serif;font-size:14.4px;line-height:14.4px;font-weight:400;color:#1a1a1a;white-space:nowrap;letter-spacing:0.272px;-webkit-text-stroke:0.1px currentColor;">actions that follow later in this rule.</div>
<div style="position:absolute;left:1150px;top:417.01px;font-family:'Liberation Sans',sans-serif;font-size:14.4px;line-height:14.4px;font-weight:400;color:#1a1a1a;white-space:nowrap;letter-spacing:0.321px;-webkit-text-stroke:0.1px currentColor;">This change modifies the output data for future</div>
<div style="position:absolute;left:1150px;top:436.81px;font-family:'Liberation Sans',sans-serif;font-size:14.4px;line-height:14.4px;font-weight:400;color:#1a1a1a;white-space:nowrap;letter-spacing:0.131px;-webkit-text-stroke:0.1px currentColor;">send actions in this rule.</div>
<div style="position:absolute;left:1150px;top:476.81px;font-family:'Liberation Sans',sans-serif;font-size:14.4px;line-height:14.4px;font-weight:400;color:#1a1a1a;white-space:nowrap;letter-spacing:0.138px;-webkit-text-stroke:0.1px currentColor;">For example if the input data is 987,xyz,$$$ and</div>
<div style="position:absolute;left:1150px;top:496.61px;font-family:'Liberation Sans',sans-serif;font-size:14.4px;line-height:14.4px;font-weight:400;color:#1a1a1a;white-space:nowrap;letter-spacing:0.219px;-webkit-text-stroke:0.1px currentColor;">this action replaces the “,” with the “[F2]” key and</div>
<div style="position:absolute;left:1150px;top:516.41px;font-family:'Liberation Sans',sans-serif;font-size:14.4px;line-height:14.4px;font-weight:400;color:#1a1a1a;white-space:nowrap;letter-spacing:0.131px;-webkit-text-stroke:0.1px currentColor;">the next action is Send All Data, then 987[F2]xyz</div>
<div style="position:absolute;left:1150px;top:536.11px;font-family:'Liberation Sans',sans-serif;font-size:14.4px;line-height:14.4px;font-weight:400;color:#1a1a1a;white-space:nowrap;letter-spacing:0.234px;-webkit-text-stroke:0.1px currentColor;">[F2]$$$ is transmitted to the host.</div>
<div style="position:absolute;left:1150px;top:569.08px;font-family:'Liberation Sans',sans-serif;font-size:14.2px;line-height:14.2px;font-weight:400;color:#1a1a1a;white-space:nowrap;-webkit-text-stroke:0.1px currentColor;">Character (ASCII) to Replace</div>
<div style="position:absolute;left:1150.00px;top:591.50px;width:324px;height:27.5px;background:linear-gradient(#f4f4f4,#e7e7e7);border:1px solid #c4c4c4;box-sizing:border-box"></div>
<svg style="position:absolute;left:1457px;top:601.25px" width="11" height="8" viewBox="0 0 11 8"><path d="M1.5 2L5.5 6L9.5 2" stroke="#444" stroke-width="1.5" fill="none"/></svg>
<div style="position:absolute;left:1157px;top:598.81px;font-family:'Liberation Sans',sans-serif;font-size:14.4px;line-height:14.4px;font-weight:700;color:#111;white-space:nowrap;-webkit-text-stroke:0.1px currentColor;">29</div>
<div style="position:absolute;left:1187.3px;top:599.15px;font-family:'Liberation Sans',sans-serif;font-size:14px;line-height:14px;font-weight:400;color:#111;white-space:nowrap;letter-spacing:-0.38px;-webkit-text-stroke:0.1px currentColor;">&lt;CTRL ]/GROUP SEPERATOR&gt;</div>
<div style="position:absolute;left:1150px;top:635.78px;font-family:'Liberation Sans',sans-serif;font-size:14.2px;line-height:14.2px;font-weight:400;color:#1a1a1a;white-space:nowrap;letter-spacing:0.18px;-webkit-text-stroke:0.1px currentColor;">Replace with keystroke</div>
<div style="position:absolute;left:1150.00px;top:658.50px;width:324px;height:26px;background:linear-gradient(#f4f4f4,#e7e7e7);border:1px solid #c4c4c4;box-sizing:border-box"></div>
<svg style="position:absolute;left:1457px;top:667.5px" width="11" height="8" viewBox="0 0 11 8"><path d="M1.5 2L5.5 6L9.5 2" stroke="#444" stroke-width="1.5" fill="none"/></svg>
<div style="position:absolute;left:1157px;top:664.81px;font-family:'Liberation Sans',sans-serif;font-size:14.4px;line-height:14.4px;font-weight:400;color:#111;white-space:nowrap;-webkit-text-stroke:0.1px currentColor;">Functions</div>
<div style="position:absolute;left:1150.00px;top:691.50px;width:324px;height:26.5px;background:linear-gradient(#f4f4f4,#e7e7e7);border:1px solid #c4c4c4;box-sizing:border-box"></div>
<svg style="position:absolute;left:1457px;top:700.75px" width="11" height="8" viewBox="0 0 11 8"><path d="M1.5 2L5.5 6L9.5 2" stroke="#444" stroke-width="1.5" fill="none"/></svg>
<div style="position:absolute;left:1157px;top:699.11px;font-family:'Liberation Sans',sans-serif;font-size:14.4px;line-height:14.4px;font-weight:700;color:#111;white-space:nowrap;-webkit-text-stroke:0.1px currentColor;">8</div>
<div style="position:absolute;left:1200px;top:699.11px;font-family:'Liberation Sans',sans-serif;font-size:14.4px;line-height:14.4px;font-weight:400;color:#111;white-space:nowrap;-webkit-text-stroke:0.1px currentColor;">&lt;F 8&gt;</div>
<div style="position:absolute;left:1330.00px;top:765.50px;width:73px;height:31px;background:#f6f6f6;border:1px solid #adadad;border-radius:2.5px;box-sizing:border-box"></div>
<div style="position:absolute;left:1332.00px;top:767.50px;width:69px;height:27px;background:linear-gradient(#79b5e3,#5c9fd2)"></div>
<div style="position:absolute;left:1342px;top:773.06px;font-family:'Liberation Sans',sans-serif;font-size:18px;line-height:18px;font-weight:400;color:#fff;white-space:nowrap;transform:scaleX(0.805);transform-origin:0 0;-webkit-text-stroke:0;">CLOSE</div>
<div style="position:absolute;left:1411.00px;top:765.50px;width:62px;height:31px;background:#f6f6f6;border:1px solid #adadad;border-radius:2.5px;box-sizing:border-box"></div>
<div style="position:absolute;left:1413.00px;top:767.50px;width:58px;height:27px;background:linear-gradient(#79b5e3,#5c9fd2)"></div>
<div style="position:absolute;left:1423px;top:773.06px;font-family:'Liberation Sans',sans-serif;font-size:18px;line-height:18px;font-weight:400;color:#fff;white-space:nowrap;transform:scaleX(0.835);transform-origin:0 0;-webkit-text-stroke:0;">SAVE</div>
</body></html>
